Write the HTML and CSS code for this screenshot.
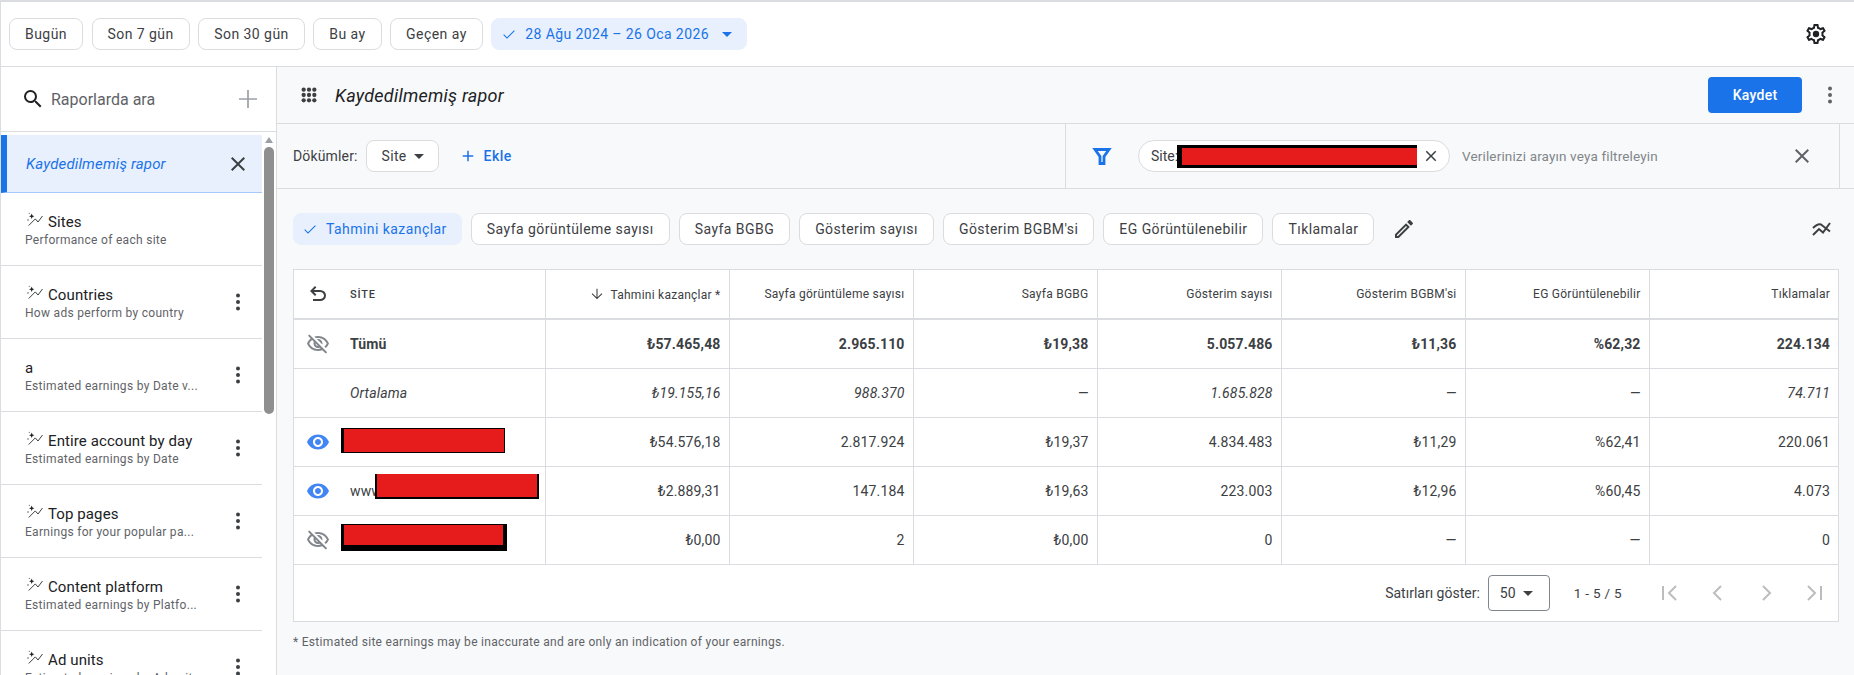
FILE: index.html
```html
<!DOCTYPE html>
<html>
<head>
  <title>Raporlar</title>
  <meta charset="utf-8">
  <link rel="stylesheet" href="styles.css">
</head>
<body>
<svg class="defs" width="0" height="0">
  <symbol id="i-close" viewBox="0 0 24 24"><path d="M19 6.41 17.59 5 12 10.59 6.41 5 5 6.41 10.59 12 5 17.59 6.41 19 12 13.41 17.59 19 19 17.59 13.41 12z"/></symbol>
  <symbol id="i-plus" viewBox="0 0 24 24"><path d="M19 13h-6v6h-2v-6H5v-2h6V5h2v6h6v2z"/></symbol>
  <symbol id="i-check" viewBox="0 0 24 24"><path d="M9 16.900 4.500 12.400l-1.100 1.100L9 19.100 20.700 7.400l-1.100-1.100z"/></symbol>
  <symbol id="i-caret" viewBox="0 0 24 24"><path d="M7 10l5 5 5-5z"/></symbol>
  <symbol id="i-more" viewBox="0 0 24 24"><circle cx="12" cy="5.500" r="2"/><circle cx="12" cy="12" r="2"/><circle cx="12" cy="18.500" r="2"/></symbol>
  <symbol id="i-spark" viewBox="0 0 16 15"><path d="M4.700 1.500l.8 1.900 1.900.8-1.900.8-.8 1.900-.8-1.900-1.900-.8 1.900-.8z" fill="#202124"/><circle cx="1" cy="8" r=".7" fill="#3c4043"/><circle cx="2.300" cy="1.300" r=".6" fill="#5f6368"/><path d="M1.700 13.500 8.300 6.900l2.700 3.100 4.500-6" fill="none" stroke="#3c4043" stroke-width="1"/></symbol>
  <symbol id="i-eye" viewBox="0 0 24 24"><path d="M12 4.500C7 4.500 2.730 7.610 1 12c1.730 4.390 6 7.500 11 7.500s9.270-3.110 11-7.500c-1.730-4.390-6-7.500-11-7.500zM12 17c-2.760 0-5-2.240-5-5s2.240-5 5-5 5 2.240 5 5-2.240 5-5 5zm0-8c-1.660 0-3 1.340-3 3s1.340 3 3 3 3-1.340 3-3-1.340-3-3-3z"/></symbol>
  <symbol id="i-eye-off" viewBox="0 0 24 24"><path d="M12 6c3.79 0 7.17 2.13 8.82 5.5-.59 1.22-1.42 2.27-2.41 3.12l1.41 1.41c1.39-1.23 2.49-2.77 3.18-4.53C21.27 7.11 17 4 12 4c-1.27 0-2.49.2-3.64.57l1.65 1.65C10.66 6.09 11.32 6 12 6zm-1.07 1.14L13 9.21c.57.25 1.03.71 1.28 1.28l2.07 2.07c.08-.34.14-.7.14-1.07C16.5 9.01 14.48 7 12 7c-.37 0-.72.05-1.07.14zM2.01 3.87l2.68 2.68C3.06 7.83 1.77 9.53 1 11.5 2.73 15.89 7 19 12 19c1.52 0 2.98-.29 4.32-.82l3.42 3.42 1.41-1.41L3.42 2.45 2.01 3.87zm7.5 7.5 2.61 2.61c-.04.01-.08.02-.12.02-1.38 0-2.5-1.12-2.5-2.5 0-.05.01-.08.01-.13zm-3.4-3.4 1.75 1.75c-.23.55-.36 1.15-.36 1.78 0 2.48 2.02 4.5 4.5 4.5.63 0 1.23-.13 1.77-.36l.98.98c-.88.24-1.8.38-2.75.38-3.79 0-7.17-2.13-8.82-5.5.7-1.43 1.72-2.61 2.93-3.53z"/></symbol>
</svg>

<div class="page">
  <div class="datebar">
    <button class="btn">Bugün</button>
    <button class="btn">Son 7 gün</button>
    <button class="btn">Son 30 gün</button>
    <button class="btn">Bu ay</button>
    <button class="btn">Geçen ay</button>
    <button class="btn btn-on date-btn">
      <svg class="ic16"><use href="#i-check"/></svg>
      <span>28 Ağu 2024 – 26 Oca 2026</span>
      <svg class="ic caret-date"><use href="#i-caret"/></svg>
    </button>
    <svg class="gear" viewBox="0 0 24 24"><path d="M19.43 12.98c.04-.32.07-.64.07-.98 0-.34-.03-.66-.07-.98l2.11-1.65c.19-.15.24-.42.12-.64l-2-3.46c-.09-.16-.26-.25-.44-.25-.06 0-.12.01-.17.03l-2.49 1c-.52-.4-1.08-.73-1.69-.98l-.38-2.65C14.46 2.18 14.25 2 14 2h-4c-.25 0-.46.18-.49.42l-.38 2.65c-.61.25-1.17.59-1.69.98l-2.49-1c-.06-.02-.12-.03-.18-.03-.17 0-.34.09-.43.25l-2 3.46c-.13.22-.07.49.12.64l2.11 1.65c-.04.32-.07.65-.07.98 0 .33.03.66.07.98l-2.11 1.65c-.19.15-.24.42-.12.64l2 3.46c.09.16.26.25.44.25.06 0 .12-.01.17-.03l2.49-1c.52.4 1.08.73 1.69.98l.38 2.65c.03.24.24.42.49.42h4c.25 0 .46-.18.49-.42l.38-2.65c.61-.25 1.17-.59 1.69-.98l2.49 1c.06.02.12.03.18.03.17 0 .34-.09.43-.25l2-3.46c.12-.22.07-.49-.12-.64l-2.11-1.65zm-1.98-1.71c.04.31.05.52.05.73 0 .21-.02.43-.05.73l-.14 1.13.89.7 1.08.84-.7 1.21-1.27-.51-1.04-.42-.9.68c-.43.32-.84.56-1.25.73l-1.06.43-.16 1.13-.2 1.35h-1.4l-.19-1.35-.16-1.13-1.06-.43c-.43-.18-.83-.41-1.23-.71l-.91-.7-1.06.43-1.27.51-.7-1.21 1.08-.84.89-.7-.14-1.13c-.03-.31-.05-.54-.05-.74s.02-.43.05-.73l.14-1.13-.89-.7-1.08-.84.7-1.21 1.27.51 1.04.42.9-.68c.43-.32.84-.56 1.25-.73l1.06-.43.16-1.13.2-1.35h1.39l.19 1.35.16 1.13 1.06.43c.43.18.83.41 1.23.71l.91.7 1.06-.43 1.27-.51.7 1.21-1.07.85-.89.7.14 1.13z"/><circle cx="12" cy="12" r="3.200"/></svg>
  </div>

  <div class="main">
    <aside class="side">
      <div class="search">
        <svg class="ic search-ic" viewBox="0 0 24 24"><path d="M15.500 14h-.79l-.28-.27A6.471 6.471 0 0 0 16 9.500 6.500 6.500 0 1 0 9.500 16c1.610 0 3.090-.59 4.230-1.570l.27.28v.79l5 4.990L20.490 19l-4.990-5zm-6 0C7.010 14 5 11.990 5 9.500S7.010 5 9.500 5 14 7.010 14 9.500 11.990 14 9.500 14z"/></svg>
        <span class="search-text">Raporlarda ara</span>
        <svg class="search-plus" viewBox="0 0 20 20"><path d="M10 1v18M1 10h18" fill="none" stroke="#9aa0a6" stroke-width="1.700"/></svg>
      </div>
      <div class="side-body">
        <div class="list">
          <div class="item-active">
            <span>Kaydedilmemiş rapor</span>
            <svg class="ic"><use href="#i-close"/></svg>
          </div>
          <div class="item">
            <div class="item-text">
              <div class="item-title"><svg class="spark"><use href="#i-spark"/></svg>Sites</div>
              <div class="item-sub">Performance of each site</div>
            </div>
          </div>
          <div class="item">
            <div class="item-text">
              <div class="item-title"><svg class="spark"><use href="#i-spark"/></svg>Countries</div>
              <div class="item-sub">How ads perform by country</div>
            </div>
            <svg class="ic more"><use href="#i-more"/></svg>
          </div>
          <div class="item">
            <div class="item-text">
              <div class="item-title">a</div>
              <div class="item-sub">Estimated earnings by Date v...</div>
            </div>
            <svg class="ic more"><use href="#i-more"/></svg>
          </div>
          <div class="item">
            <div class="item-text">
              <div class="item-title"><svg class="spark"><use href="#i-spark"/></svg>Entire account by day</div>
              <div class="item-sub">Estimated earnings by Date</div>
            </div>
            <svg class="ic more"><use href="#i-more"/></svg>
          </div>
          <div class="item">
            <div class="item-text">
              <div class="item-title"><svg class="spark"><use href="#i-spark"/></svg>Top pages</div>
              <div class="item-sub">Earnings for your popular pa...</div>
            </div>
            <svg class="ic more"><use href="#i-more"/></svg>
          </div>
          <div class="item">
            <div class="item-text">
              <div class="item-title"><svg class="spark"><use href="#i-spark"/></svg>Content platform</div>
              <div class="item-sub">Estimated earnings by Platfo...</div>
            </div>
            <svg class="ic more"><use href="#i-more"/></svg>
          </div>
          <div class="item">
            <div class="item-text">
              <div class="item-title"><svg class="spark"><use href="#i-spark"/></svg>Ad units</div>
              <div class="item-sub">Estimated earnings by Ad unit</div>
            </div>
            <svg class="ic more"><use href="#i-more"/></svg>
          </div>
        </div>
        <div class="scroll">
          <div class="scroll-up"></div>
          <div class="scroll-thumb"></div>
        </div>
      </div>
    </aside>

    <section class="content">
      <div class="titlebar">
        <svg class="apps" viewBox="0 0 18 18"><circle cx="3" cy="3" r="2.400"/><circle cx="9" cy="3" r="2.400"/><circle cx="15" cy="3" r="2.400"/><circle cx="3" cy="9" r="2.400"/><circle cx="9" cy="9" r="2.400"/><circle cx="15" cy="9" r="2.400"/><circle cx="3" cy="15" r="2.400"/><circle cx="9" cy="15" r="2.400"/><circle cx="15" cy="15" r="2.400"/></svg>
        <span class="title">Kaydedilmemiş rapor</span>
        <button class="save">Kaydet</button>
        <svg class="ic title-more"><use href="#i-more"/></svg>
      </div>

      <div class="filterbar">
        <div class="breakdown">
          <span class="label">Dökümler:</span>
          <button class="btn site-btn">Site<svg class="ic"><use href="#i-caret"/></svg></button>
          <span class="add"><svg class="ic18"><use href="#i-plus"/></svg>Ekle</span>
        </div>
        <div class="filters">
          <svg class="funnel" viewBox="0 0 24 24"><path d="M5 5.500h14l-5 7v7h-4v-7z" fill="none" stroke="#1a73e8" stroke-width="2.800"/></svg>
          <div class="chip">
            <span>Site:</span>
            <span class="redact-chip"></span>
            <svg class="chip-x"><use href="#i-close"/></svg>
          </div>
          <span class="placeholder">Verilerinizi arayın veya filtreleyin</span>
          <svg class="ic filter-x"><use href="#i-close"/></svg>
        </div>
      </div>

      <div class="report">
        <div class="metrics">
          <button class="btn btn-on"><svg class="ic16"><use href="#i-check"/></svg>Tahmini kazançlar</button>
          <button class="btn">Sayfa görüntüleme sayısı</button>
          <button class="btn">Sayfa BGBG</button>
          <button class="btn">Gösterim sayısı</button>
          <button class="btn">Gösterim BGBM'si</button>
          <button class="btn">EG Görüntülenebilir</button>
          <button class="btn">Tıklamalar</button>
          <svg class="ic pencil" viewBox="0 0 24 24"><path d="M3 17.250V21h3.750L17.810 9.940l-3.750-3.750L3 17.250zM5.920 19H5v-.92l9.060-9.060.92.92L5.920 19zM20.710 5.630l-2.340-2.340c-.2-.2-.45-.29-.71-.29s-.51.1-.7.29l-1.830 1.830 3.750 3.750 1.830-1.830c.39-.39.39-1.020 0-1.410z"/></svg>
          <svg class="trend" viewBox="0 0 24 24"><path d="M3 11c3-3 6-4.500 8-3.500l9 7M3 18l6-6 4 3.500L20 6" fill="none" stroke="#3c4043" stroke-width="2"/></svg>
        </div>

        <div class="card">
          <table class="grid">
            <colgroup><col class="col-site"><col span="6" class="col-num"><col></colgroup>
            <thead>
              <tr>
                <th class="site">
                  <div class="site-cell">
                    <svg class="ic" viewBox="0 0 24 24"><path d="M7 19v-2h7.100q1.575 0 2.738-1T18 13.500q0-1.500-1.162-2.500T14.100 10H7.800l2.600 2.600L9 14 4 9l5-5 1.400 1.400L7.800 8h6.300q2.425 0 4.163 1.575T20 13.500q0 2.350-1.737 3.925T14.100 19z"/></svg>
                    <span class="site-head">SİTE</span>
                  </div>
                </th>
                <th><svg class="ic16 sort" viewBox="0 0 24 24"><path d="M20 12l-1.100-1.100-6.100 6.100V4h-1.600v13l-6.100-6.100L4 12l8 8z"/></svg>Tahmini kazançlar *</th>
                <th>Sayfa görüntüleme sayısı</th>
                <th>Sayfa BGBG</th>
                <th>Gösterim sayısı</th>
                <th>Gösterim BGBM'si</th>
                <th>EG Görüntülenebilir</th>
                <th>Tıklamalar</th>
              </tr>
            </thead>
            <tbody>
              <tr class="total">
                <td class="site"><div class="site-cell"><svg class="ic eye-off"><use href="#i-eye-off"/></svg><span>Tümü</span></div></td>
                <td>₺57.465,48</td><td>2.965.110</td><td>₺19,38</td><td>5.057.486</td><td>₺11,36</td><td>%62,32</td><td>224.134</td>
              </tr>
              <tr class="avg">
                <td class="site"><div class="site-cell"><span class="ic-space"></span><span>Ortalama</span></div></td>
                <td>₺19.155,16</td><td>988.370</td><td>—</td><td>1.685.828</td><td>—</td><td>—</td><td>74.711</td>
              </tr>
              <tr>
                <td class="site"><div class="site-cell"><svg class="ic eye"><use href="#i-eye"/></svg></div><span class="redact redact-1"></span></td>
                <td>₺54.576,18</td><td>2.817.924</td><td>₺19,37</td><td>4.834.483</td><td>₺11,29</td><td>%62,41</td><td>220.061</td>
              </tr>
              <tr>
                <td class="site"><div class="site-cell"><svg class="ic eye"><use href="#i-eye"/></svg><span>www</span></div><span class="redact redact-2"></span></td>
                <td>₺2.889,31</td><td>147.184</td><td>₺19,63</td><td>223.003</td><td>₺12,96</td><td>%60,45</td><td>4.073</td>
              </tr>
              <tr>
                <td class="site"><div class="site-cell"><svg class="ic eye-off"><use href="#i-eye-off"/></svg></div><span class="redact redact-3"></span></td>
                <td>₺0,00</td><td>2</td><td>₺0,00</td><td>0</td><td>—</td><td>—</td><td>0</td>
              </tr>
            </tbody>
          </table>
          <div class="pager">
            <span>Satırları göster:</span>
            <div class="rows-select">50<svg class="ic"><use href="#i-caret"/></svg></div>
            <span class="range">1 - 5 / 5</span>
            <div class="pager-icons">
              <svg viewBox="0 0 24 24"><path d="M5 5v14M18 5l-7 7 7 7"/></svg>
              <svg viewBox="0 0 24 24"><path d="M15 5l-7 7 7 7"/></svg>
              <svg viewBox="0 0 24 24"><path d="M9 5l7 7-7 7"/></svg>
              <svg viewBox="0 0 24 24"><path d="M19 5v14M6 5l7 7-7 7"/></svg>
            </div>
          </div>
        </div>
        <div class="note">* Estimated site earnings may be inaccurate and are only an indication of your earnings.</div>
      </div>
    </section>
  </div>
</div>
</body>
</html>
```

FILE: styles.css
```css
html, body {
  margin: 0;
  height: 100%;
  overflow: hidden;
}
body {
  font-family: Roboto, "Liberation Sans", sans-serif;
  font-size: 14px;
  color: #3c4043;
  background: #fff;
}
.defs {
  position: absolute;
}
svg {
  fill: currentColor;
  flex: none;
  display: block;
}
.ic {
  width: 24px;
  height: 24px;
}
.ic16 {
  width: 16px;
  height: 16px;
}
.ic18 {
  width: 18px;
  height: 18px;
}
.page {
  height: 100%;
  box-sizing: border-box;
  border-top: 2px solid #dadce0;
  border-left: 1px solid #dadce0;
  display: flex;
  flex-direction: column;
}

/* buttons */
.btn {
  height: 32px;
  box-sizing: border-box;
  padding: 0 15px;
  border: 1px solid #dadce0;
  border-radius: 8px;
  background: #fff;
  color: #3c4043;
  font: 400 14px Roboto, sans-serif;
  letter-spacing: .45px;
  display: inline-flex;
  align-items: center;
  white-space: nowrap;
}
.btn-on {
  background: #e8f0fe;
  border-color: #e8f0fe;
  color: #1a73e8;
  gap: 8px;
  padding: 0 14px 0 8px;
}

/* top date bar */
.datebar {
  height: 65px;
  flex: none;
  box-sizing: border-box;
  border-bottom: 1px solid #dadce0;
  padding: 0 8px;
  display: flex;
  align-items: center;
  gap: 8.500px;
}
.date-btn {
  padding: 0 7px 0 9px;
  gap: 8px;
  letter-spacing: .4px;
}
.caret-date {
  margin-left: -2px;
  color: #1a73e8;
}
.gear {
  width: 24px;
  height: 24px;
  margin-left: auto;
  margin-right: 18px;
  color: #202124;
}

.main {
  flex: 1;
  display: flex;
  min-height: 0;
}

/* left report list */
.side {
  width: 275px;
  flex: none;
  border-right: 1px solid #dadce0;
  box-sizing: content-box;
  display: flex;
  flex-direction: column;
  overflow: hidden;
}
.search {
  height: 65px;
  flex: none;
  box-sizing: border-box;
  border-bottom: 1px solid #dadce0;
  display: flex;
  align-items: center;
  padding: 0 18px 0 20px;
}
.search-ic {
  color: #202124;
}
.search-text {
  margin-left: 6px;
  font-size: 16px;
  color: #5f6368;
}
.search-plus {
  width: 20px;
  height: 20px;
  margin-left: auto;
}
.side-body {
  flex: 1;
  display: flex;
  min-height: 0;
  padding-top: 3px;
}
.list {
  width: 261px;
  flex: none;
}
.item-active {
  height: 58px;
  box-sizing: border-box;
  background: #e8f0fe;
  border-left: 6px solid #1a73e8;
  border-bottom: 1px solid #a8c7fa;
  display: flex;
  align-items: center;
  justify-content: space-between;
  padding: 0 12px 0 19px;
  color: #1a73e8;
  font-size: 15px;
  font-style: italic;
  letter-spacing: .15px;
}
.item-active svg {
  color: #3c4043;
}
.item {
  height: 73px;
  box-sizing: border-box;
  border-bottom: 1px solid #dadce0;
  display: flex;
  align-items: center;
  justify-content: space-between;
  padding: 0 12px 0 24px;
}
.item-text {
  padding-top: 1px;
  min-width: 0;
}
.item-title {
  display: flex;
  align-items: center;
  height: 20px;
  color: #202124;
  font-size: 15px;
  letter-spacing: .1px;
  white-space: nowrap;
}
.spark {
  width: 16px;
  height: 15px;
  margin: -4px 5px 0 2px;
}
.item-sub {
  font-size: 12px;
  letter-spacing: .3px;
  line-height: 16px;
  color: #5f6368;
  white-space: nowrap;
}
.more {
  color: #3c4043;
}
.scroll {
  width: 10px;
  margin-left: 2px;
  flex: none;
}
.scroll-up {
  width: 0;
  margin: 2px auto 4px;
  border: 4.500px solid transparent;
  border-top: 0;
  border-bottom: 6px solid #9aa0a6;
}
.scroll-thumb {
  height: 267px;
  background: #8f8f8f;
  border-radius: 5px;
}

/* right side */
.content {
  flex: 1;
  min-width: 0;
  background: #f8f9fa;
  display: flex;
  flex-direction: column;
}
.titlebar {
  height: 57px;
  flex: none;
  box-sizing: border-box;
  border-bottom: 1px solid #dadce0;
  display: flex;
  align-items: center;
  padding: 0 12px 0 24px;
}
.apps {
  width: 16px;
  height: 16px;
  color: #3c4043;
}
.title {
  margin-left: 18px;
  font-size: 18px;
  font-style: italic;
  letter-spacing: .25px;
  color: #202124;
}
.save {
  margin-left: auto;
  width: 94px;
  height: 36px;
  border: 0;
  border-radius: 4px;
  background: #1a73e8;
  color: #fff;
  font: 500 14px Roboto, sans-serif;
  letter-spacing: .25px;
}
.title-more {
  margin-left: 16px;
  color: #5f6368;
}
.filterbar {
  height: 65px;
  flex: none;
  box-sizing: border-box;
  border-bottom: 1px solid #dadce0;
  display: flex;
}
.breakdown {
  width: 789px;
  flex: none;
  box-sizing: border-box;
  border-right: 1px solid #dadce0;
  display: flex;
  align-items: center;
  padding-left: 16px;
}
.label {
  font-size: 14px;
  letter-spacing: .15px;
}
.site-btn {
  margin-left: 8px;
  padding: 0 7px 0 15px;
  letter-spacing: .3px;
}
.add {
  margin-left: 20px;
  display: flex;
  align-items: center;
  gap: 7px;
  color: #1a73e8;
  font-weight: 500;
  letter-spacing: .5px;
}
.filters {
  width: 774px;
  flex: none;
  box-sizing: border-box;
  border-right: 1px solid #dadce0;
  display: flex;
  align-items: center;
  padding-left: 24px;
}
.funnel {
  width: 24px;
  height: 24px;
}
.chip {
  margin-left: 24px;
  height: 32px;
  width: 312px;
  box-sizing: border-box;
  border: 1px solid #dadce0;
  border-radius: 16px;
  background: #fff;
  display: flex;
  align-items: center;
  padding-left: 12px;
}
.redact-chip {
  width: 235px;
  height: 17px;
  margin-left: -1px;
  background: #e61c1c;
  border: 3px solid #000;
  border-left-width: 5px;
  border-right-width: 0;
}
.chip-x {
  width: 18px;
  height: 18px;
  margin-left: 5px;
  color: #3c4043;
}
.placeholder {
  margin-left: 12px;
  font-size: 13.500px;
  letter-spacing: .15px;
  color: #80868b;
}
.filter-x {
  margin-left: auto;
  margin-right: 25px;
  color: #5f6368;
}
.report {
  flex: 1;
  padding: 24px 15px 0 16px;
  min-height: 0;
}
.metrics {
  display: flex;
  align-items: center;
  gap: 9px;
  height: 32px;
}
.metrics .btn {
  letter-spacing: .44px;
}
.pencil {
  margin-left: 9px;
  color: #3c4043;
}
.trend {
  width: 24px;
  height: 24px;
  margin-left: auto;
  margin-right: 5px;
}

/* table */
.card {
  margin-top: 24px;
  background: #fff;
  border: 1px solid #dadce0;
}
.grid {
  width: 100%;
  table-layout: fixed;
  border-collapse: collapse;
}
.col-site {
  width: 251px;
}
.col-num {
  width: 184px;
}
.grid th {
  height: 48px;
  padding: 0 8px 0 0;
  font-weight: 400;
  font-size: 12px;
  letter-spacing: .25px;
  text-align: right;
  color: #3c4043;
  border-left: 1px solid #dadce0;
  border-bottom: 2px solid #dadce0;
  white-space: nowrap;
}
.grid td {
  height: 48px;
  padding: 0 8px 0 0;
  text-align: right;
  border-left: 1px solid #dadce0;
  border-bottom: 1px solid #dadce0;
  letter-spacing: .15px;
}
.grid .site {
  border-left: 0;
  padding: 0;
  text-align: left;
  position: relative;
}
.site-cell {
  display: flex;
  align-items: center;
  gap: 20px;
  padding-left: 12px;
}
.ic-space {
  width: 24px;
  flex: none;
}
.site-head {
  font-size: 11px;
  font-weight: 500;
  letter-spacing: .8px;
}
.sort {
  display: inline-block;
  vertical-align: -3px;
  margin-right: 5px;
}
.total td {
  font-weight: 700;
}
.avg td {
  font-style: italic;
}
.eye {
  color: #4285f4;
}
.eye-off {
  color: #80868b;
}
.redact {
  position: absolute;
  box-sizing: border-box;
  background: #e61c1c;
  border: solid #000;
}
.redact-1 {
  left: 47px;
  top: 10px;
  width: 164px;
  height: 25px;
  border-width: 1px 1px 1px 3px;
}
.redact-2 {
  left: 81px;
  top: 7px;
  width: 164px;
  height: 25px;
  border-width: 0 2px 2px 2px;
}
.redact-3 {
  left: 47px;
  top: 8px;
  width: 166px;
  height: 27px;
  border-width: 1px 4px 6px 3px;
}
.pager {
  height: 56px;
  display: flex;
  align-items: center;
  justify-content: flex-end;
  padding-right: 12px;
  font-size: 14px;
}
.rows-select {
  width: 62px;
  height: 36px;
  margin-left: 8px;
  box-sizing: border-box;
  border: 1px solid #80868b;
  border-radius: 4px;
  display: flex;
  align-items: center;
  padding-left: 11px;
}
.range {
  margin-left: 24px;
  font-size: 13.500px;
  letter-spacing: .3px;
}
.pager-icons {
  display: flex;
  gap: 24px;
  margin-left: 36px;
}
.pager-icons svg {
  width: 24px;
  height: 24px;
  fill: none;
  stroke: #bdbdbd;
  stroke-width: 2;
}
.note {
  margin-top: 13px;
  font-size: 12px;
  letter-spacing: .3px;
  color: #5f6368;
}
```
